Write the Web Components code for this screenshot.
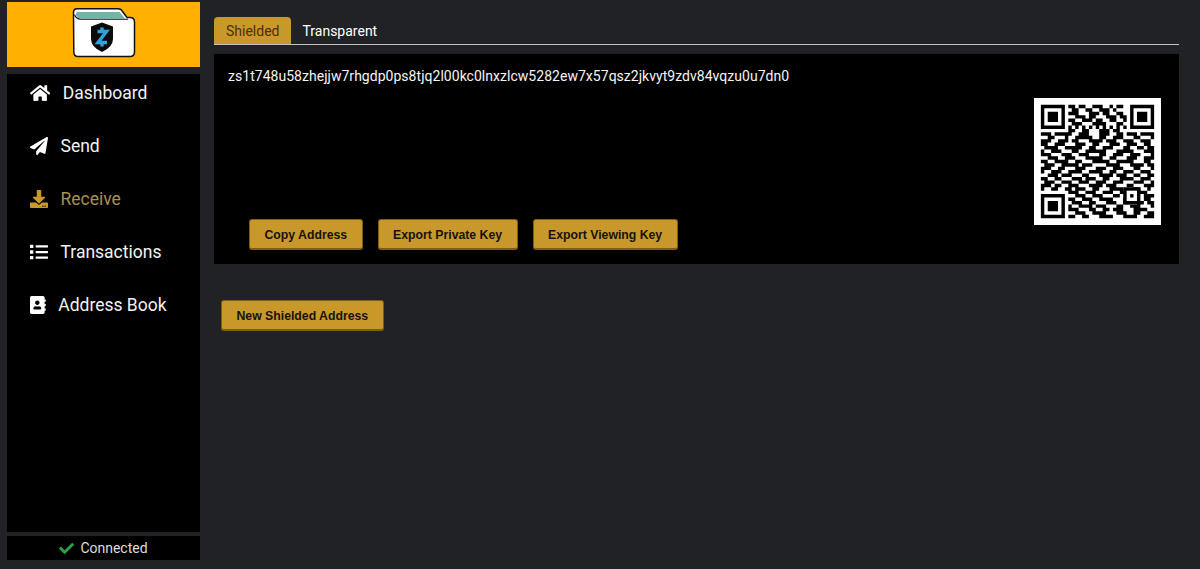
<!DOCTYPE html>
<html>
<head>
<meta charset="utf-8">
<title>Receive</title>
<style>
  html, body { margin: 0; height: 100%; background: #212225; }
  body { font-family: Roboto, "Liberation Sans", sans-serif; overflow: hidden; }
</style>
</head>
<body>
<wallet-app>
  <wallet-sidebar slot="side">
    <nav-item icon="home" label="Dashboard"></nav-item>
    <nav-item icon="send" label="Send"></nav-item>
    <nav-item icon="receive" label="Receive" active></nav-item>
    <nav-item icon="transactions" label="Transactions"></nav-item>
    <nav-item icon="book" label="Address Book"></nav-item>
  </wallet-sidebar>
  <receive-view slot="main"></receive-view>
</wallet-app>

<script>
const ICONS = {
  home: ['0 0 576 512', 'M280.37 148.26L96 300.11V464a16 16 0 0 0 16 16l112.06-.29a16 16 0 0 0 15.92-16V368a16 16 0 0 1 16-16h64a16 16 0 0 1 16 16v95.64a16 16 0 0 0 16 16.05L464 480a16 16 0 0 0 16-16V300L295.67 148.26a12.19 12.19 0 0 0-15.3 0zM571.6 251.47L488 182.56V44.05a12 12 0 0 0-12-12h-56a12 12 0 0 0-12 12v72.61L318.47 43a48 48 0 0 0-61 0L4.34 251.47a12 12 0 0 0-1.6 16.9l25.5 31A12 12 0 0 0 45.15 301l235.22-193.74a12.19 12.19 0 0 1 15.3 0L530.9 301a12 12 0 0 0 16.9-1.6l25.5-31a12 12 0 0 0-1.7-16.93z'],
  send: ['0 0 512 512', 'M476 3.2L12.5 270.6c-18.1 10.4-15.8 35.6 2.2 43.2L121 358.4l287.3-253.2c5.5-4.9 13.3 2.6 8.6 8.3L176 407v80.5c0 23.6 28.5 32.9 42.5 15.8L282 426l124.6 52.2c14.2 6 30.4-2.9 33-18.2l72-432C515 7.8 493.3-6.8 476 3.2z'],
  receive: ['0 0 512 512', 'M216 0h80c13.3 0 24 10.7 24 24v168h87.7c17.8 0 26.7 21.5 14.1 34.1L269.7 378.3c-7.5 7.5-19.8 7.5-27.3 0L90.1 226.1c-12.6-12.6-3.7-34.1 14.1-34.1H192V24c0-13.3 10.7-24 24-24zm296 376v112c0 13.3-10.7 24-24 24H24c-13.3 0-24-10.7-24-24V376c0-13.3 10.7-24 24-24h146.7l49 49c20.1 20.1 52.5 20.1 72.6 0l49-49H488c13.3 0 24 10.7 24 24zm-124 88c0-11-9-20-20-20s-20 9-20 20 9 20 20 20 20-9 20-20zm64 0c0-11-9-20-20-20s-20 9-20 20 9 20 20 20 20-9 20-20z'],
  transactions: ['0 0 512 512', 'M80 368H16a16 16 0 0 0-16 16v64a16 16 0 0 0 16 16h64a16 16 0 0 0 16-16v-64a16 16 0 0 0-16-16zm0-320H16A16 16 0 0 0 0 64v64a16 16 0 0 0 16 16h64a16 16 0 0 0 16-16V64a16 16 0 0 0-16-16zm0 160H16a16 16 0 0 0-16 16v64a16 16 0 0 0 16 16h64a16 16 0 0 0 16-16v-64a16 16 0 0 0-16-16zm416 176H176a16 16 0 0 0-16 16v32a16 16 0 0 0 16 16h320a16 16 0 0 0 16-16v-32a16 16 0 0 0-16-16zm0-320H176a16 16 0 0 0-16 16v32a16 16 0 0 0 16 16h320a16 16 0 0 0 16-16V80a16 16 0 0 0-16-16zm0 160H176a16 16 0 0 0-16 16v32a16 16 0 0 0 16 16h320a16 16 0 0 0 16-16v-32a16 16 0 0 0-16-16z'],
  book: ['0 0 448 512', 'M436 160c6.6 0 12-5.4 12-12v-40c0-6.6-5.4-12-12-12h-20V48c0-26.5-21.5-48-48-48H48C21.5 0 0 21.5 0 48v416c0 26.5 21.5 48 48 48h320c26.5 0 48-21.5 48-48v-48h20c6.6 0 12-5.4 12-12v-40c0-6.6-5.4-12-12-12h-20v-64h20c6.6 0 12-5.4 12-12v-40c0-6.6-5.4-12-12-12h-20v-64h20zm-228-32c35.3 0 64 28.7 64 64s-28.7 64-64 64-64-28.7-64-64 28.7-64 64-64zm112 236.8c0 10.6-10 19.2-22.4 19.2H118.4C106 384 96 375.4 96 364.8v-19.2c0-31.8 30.1-57.6 67.2-57.6h5c12.3 5.1 25.7 8 39.8 8s27.6-2.9 39.8-8h5c37.1 0 67.2 25.8 67.2 57.6v19.2z'],
  check: ['0 0 512 512', 'M173.898 439.404l-166.4-166.4c-9.997-9.997-9.997-26.206 0-36.204l36.203-36.204c9.997-9.998 26.207-9.998 36.204 0L192 312.69 432.095 72.596c9.997-9.997 26.207-9.997 36.204 0l36.203 36.204c9.997 9.997 9.997 26.206 0 36.204l-294.4 294.401c-9.998 9.997-26.207 9.997-36.204-.001z']
};

function iconSvg(name, size) {
  const [box, d] = ICONS[name];
  const w = box.split(' ')[2] / 512 * size;
  return `<svg width="${w}" height="${size}" viewBox="${box}" fill="currentColor"><path d="${d}"/></svg>`;
}

class WalletApp extends HTMLElement {
  constructor() {
    super();
    this.attachShadow({ mode: 'open' });
    this.shadowRoot.innerHTML = `
      <style>
        :host { display: flex; height: 569px; color: #fff; }
        .side { display: flex; width: 193px; margin-left: 7px; flex: none; }
        .main { display: block; flex: 1; min-width: 0; margin: 0 21px 0 14px; }
      </style>
      <div class="side"><slot name="side"></slot></div>
      <div class="main"><slot name="main"></slot></div>
    `;
  }
}

class WalletLogo extends HTMLElement {
  constructor() {
    super();
    this.attachShadow({ mode: 'open' });
    this.shadowRoot.innerHTML = `
      <style>
        :host { display: flex; height: 65px; align-items: flex-start; justify-content: center; background: #ffb000; flex: none; }
        svg { margin: 6px 0 0 1px; display: block; }
      </style>
      <svg width="64" height="50" viewBox="0 0 64 50">
        <path d="M1.500 4.500 Q1.500 .8 5 .8 H46 Q49 .8 50.500 3.500 L55 9.500 H58 Q62.500 9.500 62.500 14 V44 Q62.500 48.500 58 48.500 H6 Q1.800 48.500 1.800 44 Z" fill="#fff" stroke="#111" stroke-width="1.500"/>
        <path d="M5 4 H47.500 L53 10.500 H9 Q5 10.500 4 7 Q3.800 4 5 4 Z" fill="#6fb5a8"/>
        <path d="M2.500 6.500 Q4 11.200 9 11.200 H56" fill="none" stroke="#111" stroke-width="1.100"/>
        <path d="M30 14.500 L41 18.500 V31 Q41 39 30 44 Q19 39 19 31 V18.500 Z" fill="#0b0b0d"/>
        <path d="M25.500 23.500 H34.500 L26 34.500 H35 M30 19.500 V23.500 M30 34.500 V38.500" fill="none" stroke="#2ea3da" stroke-width="3.400"/>
      </svg>
    `;
  }
}

class NavItem extends HTMLElement {
  constructor() {
    super();
    this.attachShadow({ mode: 'open' });
  }

  connectedCallback() {
    const active = this.hasAttribute('active');
    this.shadowRoot.innerHTML = `
      <style>
        :host { display: flex; align-items: center; height: 38px; padding-left: 23px; font-size: 17.5px; color: ${active ? '#ab8f52' : '#f2f2f2'}; }
        svg { margin-right: 12.5px; flex: none; color: ${active ? '#c9982a' : '#fff'}; }
      </style>
      ${iconSvg(this.getAttribute('icon'), 18)}<span>${this.getAttribute('label')}</span>
    `;
  }
}

class StatusBar extends HTMLElement {
  constructor() {
    super();
    this.attachShadow({ mode: 'open' });
    this.shadowRoot.innerHTML = `
      <style>
        :host { display: flex; align-items: center; justify-content: center; height: 24px; background: #000; color: #ddd; font-size: 14px; flex: none; }
        svg { color: #2f9e44; margin-right: 6px; }
      </style>
      ${iconSvg('check', 15)}<span>Connected</span>
    `;
  }
}

class WalletSidebar extends HTMLElement {
  constructor() {
    super();
    this.attachShadow({ mode: 'open' });
    this.shadowRoot.innerHTML = `
      <style>
        :host { display: flex; flex-direction: column; width: 100%; padding-top: 2px; height: 558px; }
        nav { flex: 1; display: flex; flex-direction: column; gap: 15px; background: #000; margin: 7px 0 4px; }
      </style>
      <wallet-logo></wallet-logo>
      <nav><slot></slot></nav>
      <status-bar></status-bar>
    `;
  }
}

class TabBar extends HTMLElement {
  constructor() {
    super();
    this.attachShadow({ mode: 'open' });
    this.shadowRoot.innerHTML = `
      <style>
        :host { display: flex; height: 27px; margin-top: 17px; border-bottom: 1px solid #c4c4c4; font-size: 14px; }
        span { display: flex; align-items: center; padding: 0 12px; border-radius: 4px 4px 0 0; color: #fff; }
        .on { background: #c8982a; color: #4a3008; }
        .off { padding-left: 11px; }
      </style>
      <span class="on">Shielded</span><span class="off">Transparent</span>
    `;
  }
}

class GoldButton extends HTMLElement {
  constructor() {
    super();
    this.attachShadow({ mode: 'open' });
    this.shadowRoot.innerHTML = `
      <style>
        :host { display: inline-flex; }
        button {
          height: 31px; padding: 1px 14.5px 0; border: 1px solid #7d5f14; border-width: 1px 1px 2px;
          border-radius: 3px; background: #c8982a; color: #17120a;
          font: bold 12.25px "Liberation Sans", Arial, sans-serif; white-space: nowrap;
        }
      </style>
      <button><slot></slot></button>
    `;
  }
}

// rough copy of the code in the screenshot, finder squares get drawn over it
const QR_ROWS = [
  '000000001101100111001011000000000',
  '000000000110011001110100000000000',
  '000000001110001110110011000000000',
  '000000000011101100011101100000000',
  '000000001100111011001100100000000',
  '000000000111000111100011000000000',
  '000000001010101010101010100000000',
  '000000001100110001110110000000000',
  '111011111001110001110011011101111',
  '001100010011111001100111000110001',
  '111001110110001111011100111001110',
  '110011100011100110001110011100110',
  '011110011111001100111000110011011',
  '100111000110011111100011111000111',
  '111000111001110001100111001110001',
  '001110011100011111001100011100111',
  '110011110011000111110011111000110',
  '011100111110111000011110001111011',
  '111001100011100011100111000110001',
  '100111001111001111001100111001110',
  '001110111000110001111011100110011',
  '110011000111011100110001111001110',
  '011100111001110011100111000111001',
  '111011001110001111011100011000111',
  '100110011011100110001111000110010',
  '000000001110011100111001100011100',
  '000000000011100111000110011000111',
  '000000001100111001111000111000110',
  '000000000111001100011100110011011',
  '000000001001111011100011001110001',
  '000000001110001100110111000111100',
  '000000000011100111100011100110011',
  '000000001100110001111000111100111'
];

class QrCode extends HTMLElement {
  constructor() {
    super();
    this.attachShadow({ mode: 'open' });
    let cells = '';
    QR_ROWS.forEach((row, y) => {
      for (let x = 0; x < 33; x++) {
        if (row[x] === '1') cells += `M${x + 2} ${y + 2}h1v1h-1z`;
      }
    });
    const finder = (x, y) => `M${x + 2} ${y + 2}h7v7h-7zM${x + 3} ${y + 3}v5h5v-5zM${x + 4} ${y + 4}h3v3h-3z`;
    this.shadowRoot.innerHTML = `
      <style>
        :host { display: block; width: 127px; height: 127px; background: #fff; flex: none; }
        svg { display: block; }
      </style>
      <svg width="127" height="127" viewBox="0 0 37 37">
        <path d="${cells}" fill="#000"/>
        <path d="${finder(0, 0)}${finder(26, 0)}${finder(0, 26)}" fill="#000" fill-rule="evenodd"/>
        <rect x="26" y="26" width="5" height="5" fill="#000"/>
        <rect x="27" y="27" width="3" height="3" fill="#fff"/>
        <rect x="28" y="28" width="1" height="1" fill="#000"/>
      </svg>
    `;
  }
}

class AddressPanel extends HTMLElement {
  constructor() {
    super();
    this.attachShadow({ mode: 'open' });
    this.shadowRoot.innerHTML = `
      <style>
        :host { display: flex; height: 210px; margin-top: 9px; background: #000; box-sizing: border-box; }
        .left { flex: 1; min-width: 0; display: flex; flex-direction: column; justify-content: space-between; padding: 14px 0 14px 14px; }
        .addr { font-size: 14px; line-height: 16px; letter-spacing: .03px; color: #f4f4f4; white-space: nowrap; }
        .actions { display: flex; gap: 15px; margin-left: 21px; }
        .qr { align-self: flex-end; margin: 0 18px 39px 0; }
      </style>
      <div class="left">
        <div class="addr">zs1t748u58zhejjw7rhgdp0ps8tjq2l00kc0lnxzlcw5282ew7x57qsz2jkvyt9zdv84vqzu0u7dn0</div>
        <div class="actions">
          <gold-button>Copy Address</gold-button>
          <gold-button>Export Private Key</gold-button>
          <gold-button>Export Viewing Key</gold-button>
        </div>
      </div>
      <qr-code class="qr"></qr-code>
    `;
  }
}

class ReceiveView extends HTMLElement {
  constructor() {
    super();
    this.attachShadow({ mode: 'open' });
    this.shadowRoot.innerHTML = `
      <style>
        :host { display: block; }
        .more { margin: 36px 0 0 7px; }
      </style>
      <tab-bar></tab-bar>
      <address-panel></address-panel>
      <div class="more"><gold-button>New Shielded Address</gold-button></div>
    `;
  }
}

customElements.define('wallet-logo', WalletLogo);
customElements.define('nav-item', NavItem);
customElements.define('status-bar', StatusBar);
customElements.define('wallet-sidebar', WalletSidebar);
customElements.define('tab-bar', TabBar);
customElements.define('gold-button', GoldButton);
customElements.define('qr-code', QrCode);
customElements.define('address-panel', AddressPanel);
customElements.define('receive-view', ReceiveView);
customElements.define('wallet-app', WalletApp);
</script>
</body>
</html>
